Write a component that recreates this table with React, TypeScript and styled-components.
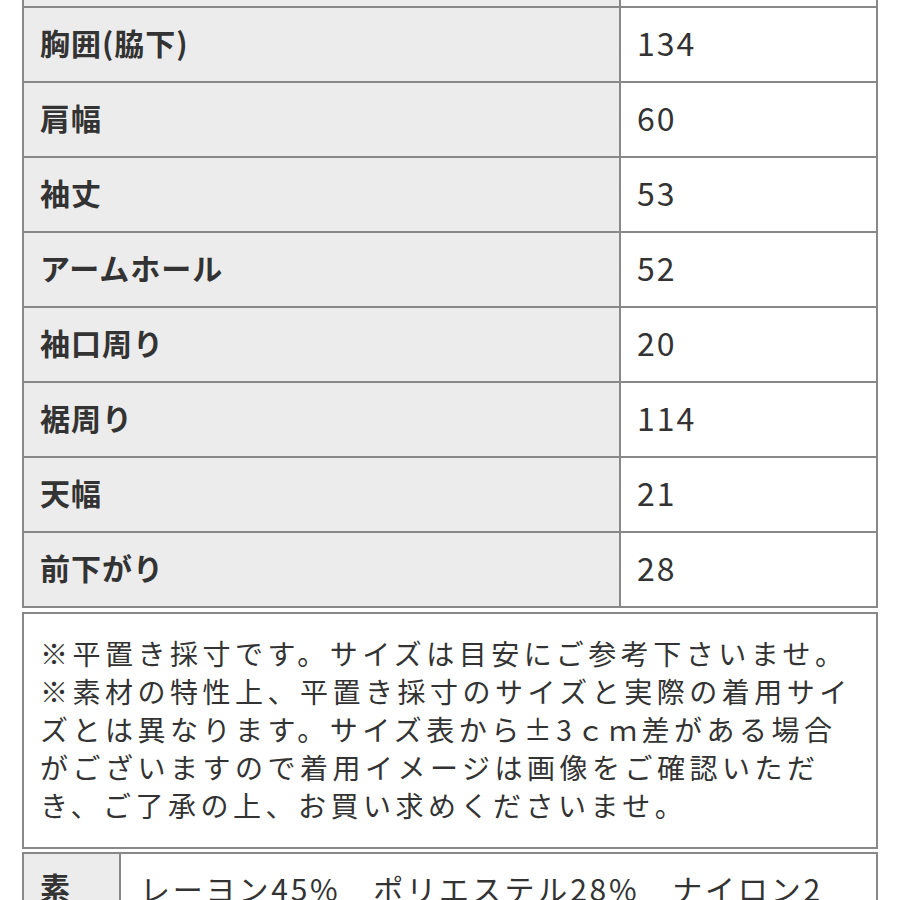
import React from 'react'
import styled, { createGlobalStyle } from 'styled-components'

const GlobalStyle = createGlobalStyle`
    html, body {
        margin: 0;
        padding: 0;
        background: #ffffff;
        overflow: hidden;
    }
    body {
        font-family: "Noto Sans CJK JP", "Noto Sans", sans-serif;
        color: #333333;
    }
`

const line = '#888888'

const Page = styled.div`
    width: 900px;
    height: 900px;
    overflow: hidden;
    padding-left: 22px;
    box-sizing: border-box;
`

const Sheet = styled.div`
    width: 856px;
    margin-top: -69px;
    display: flex;
    flex-direction: column;
`

const SizeTable = styled.table`
    width: 100%;
    border-collapse: separate;
    border-spacing: 0;
    border: 1px solid ${line};
    table-layout: fixed;
`

const Row = styled.tr`
    height: 75px;
`

const Label = styled.th<{ $width?: number }>`
    width: ${(p) => (p.$width ? `${p.$width}px` : 'auto')};
    box-sizing: border-box;
    background: #ececec;
    border: 1px solid ${line};
    padding: 0 0 6px 16px;
    text-align: left;
    vertical-align: middle;
    font-size: 30px;
    font-weight: 700;
    letter-spacing: 1px;
    color: #333333;
`

const Value = styled.td`
    background: #ffffff;
    border: 1px solid ${line};
    padding: 0 0 6px 16px;
    vertical-align: middle;
    font-size: 32px;
    font-weight: 400;
    letter-spacing: 2px;
    color: #333333;
`

const Note = styled.div`
    margin-top: 4px;
    border: 2px solid ${line};
    padding: 20px 0 23px 16px;
    font-size: 28px;
    line-height: 38px;
    letter-spacing: 4.5px;
    color: #333333;
`

const NoteLine = styled.div`
    white-space: nowrap;
`

const MaterialTable = styled(SizeTable)`
    margin-top: 3px;
`

const MaterialValue = styled(Value)`
    padding: 14px 45px 0 19px;
    vertical-align: top;
    font-size: 30px;
    letter-spacing: 2.8px;
    line-height: 40px;
    word-break: break-all;
`

const MaterialLabel = styled(Label)`
    padding: 12px 20px 0 16px;
    vertical-align: top;
    line-height: 40px;
`

const sizes: Array<[string, string]> = [
    ['着丈', '70'],
    ['胸囲(脇下)', '134'],
    ['肩幅', '60'],
    ['袖丈', '53'],
    ['アームホール', '52'],
    ['袖口周り', '20'],
    ['裾周り', '114'],
    ['天幅', '21'],
    ['前下がり', '28'],
]

const notes = [
    '※平置き採寸です。サイズは目安にご参考下さいませ。',
    '※素材の特性上、平置き採寸のサイズと実際の着用サイ',
    'ズとは異なります。サイズ表から±3ｃｍ差がある場合',
    'がございますので着用イメージは画像をご確認いただ',
    'き、ご了承の上、お買い求めくださいませ。',
]

export default function App() {
    return (
        <Page>
            <GlobalStyle />
            <Sheet>
                <SizeTable>
                    <tbody>
                        {sizes.map(([name, value], i) => (
                            <Row key={name}>
                                <Label $width={i === 0 ? 597 : undefined}>{name}</Label>
                                <Value>{value}</Value>
                            </Row>
                        ))}
                    </tbody>
                </SizeTable>
                <Note>
                    {notes.map((text) => (
                        <NoteLine key={text}>{text}</NoteLine>
                    ))}
                </Note>
                <MaterialTable>
                    <tbody>
                        <Row>
                            <MaterialLabel $width={97}>素材</MaterialLabel>
                            <MaterialValue>
                                レーヨン45%　ポリエステル28%　ナイロン27%
                            </MaterialValue>
                        </Row>
                    </tbody>
                </MaterialTable>
            </Sheet>
        </Page>
    )
}
